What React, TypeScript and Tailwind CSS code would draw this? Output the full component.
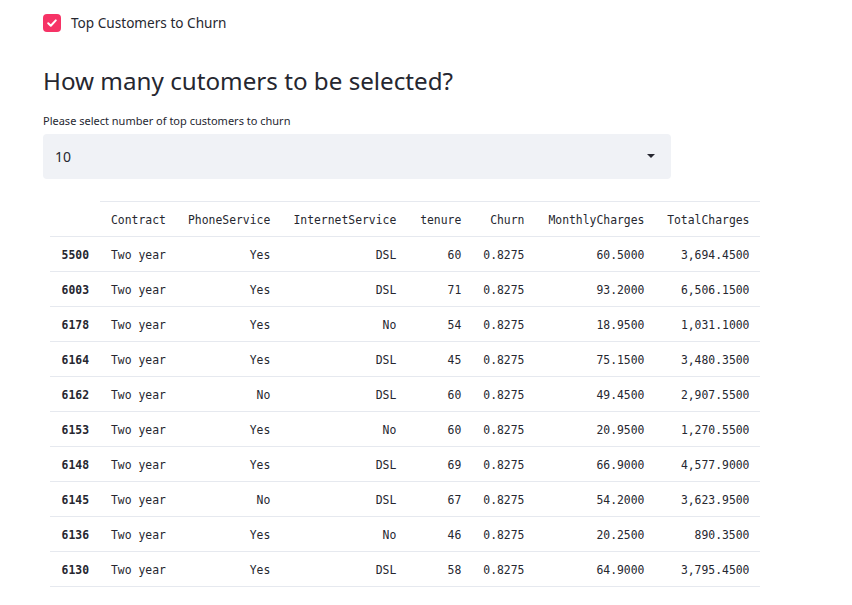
import React from "react";

const rows = [
  ["5500", "Two year", "Yes", "DSL", "60", "0.8275", "60.5000", "3,694.4500"],
  ["6003", "Two year", "Yes", "DSL", "71", "0.8275", "93.2000", "6,506.1500"],
  ["6178", "Two year", "Yes", "No", "54", "0.8275", "18.9500", "1,031.1000"],
  ["6164", "Two year", "Yes", "DSL", "45", "0.8275", "75.1500", "3,480.3500"],
  ["6162", "Two year", "No", "DSL", "60", "0.8275", "49.4500", "2,907.5500"],
  ["6153", "Two year", "Yes", "No", "60", "0.8275", "20.9500", "1,270.5500"],
  ["6148", "Two year", "Yes", "DSL", "69", "0.8275", "66.9000", "4,577.9000"],
  ["6145", "Two year", "No", "DSL", "67", "0.8275", "54.2000", "3,623.9500"],
  ["6136", "Two year", "Yes", "No", "46", "0.8275", "20.2500", "890.3500"],
  ["6130", "Two year", "Yes", "DSL", "58", "0.8275", "64.9000", "3,795.4500"],
];

const headers = ["Contract", "PhoneService", "InternetService", "tenure", "Churn", "MonthlyCharges", "TotalCharges"];
const widths = ["w-[77px]", "w-[104px]", "w-[126px]", "w-[65px]", "w-[63px]", "w-[120px]", "w-[105px]"];

export default function App() {
  const sans = { fontFamily: '"Noto Sans", "Open Sans", sans-serif' };
  return (
    <div className="w-[852px] h-[605px] bg-white text-[#262730] overflow-hidden" style={sans}>
      <div className="pl-[43px] pt-[14px]">
        <div className="flex items-center h-[18px]">
          <div className="w-[18px] h-[18px] rounded-[4px] bg-[#f63366] flex items-center justify-center">
            <svg width="12" height="12" viewBox="0 0 12 12">
              <path d="M2.2 6.2 L4.8 8.7 L9.8 3.4" stroke="white" strokeWidth="2" fill="none" strokeLinecap="round" strokeLinejoin="round" />
            </svg>
          </div>
          <span className="ml-[10px] text-[13.6px] leading-none">Top Customers to Churn</span>
        </div>
        <h2 className="mt-[34px] text-[24.2px] leading-[30px] font-normal text-[#262730]">How many cutomers to be selected?</h2>
        <div className="mt-[18px] text-[11px] leading-[14px]">Please select number of top customers to churn</div>
        <div className="mt-[6px] w-[628px] h-[45px] rounded-[4px] bg-[#f0f2f6] flex items-center justify-between pl-[12px] pr-[16px]">
          <span className="text-[14px]">10</span>
          <svg width="8" height="5" viewBox="0 0 8 5"><path d="M0 0 H8 L4 4 Z" fill="#262730" /></svg>
        </div>
      </div>
      <div className="pl-[50px] mt-[22px]">
        <table className="border-collapse text-[11.4px] text-[#262730]" style={{ fontFamily: '"DejaVu Sans Mono", monospace' }}>
          <thead>
            <tr className="h-[35px]">
              <th className="w-[50px] border-b border-[#e6e9ef]"></th>
              {headers.map((h, i) => (
                <th
                  key={h}
                  className={`${widths[i]} border-t border-b border-[#e6e9ef] font-normal px-[11px] pt-[3px] ${i === 0 ? "text-left" : "text-right"}`}
                >
                  {h}
                </th>
              ))}
            </tr>
          </thead>
          <tbody>
            {rows.map((r) => (
              <tr key={r[0]} className="h-[35px] border-b border-[#e6e9ef]">
                <td className="pr-[11px] pt-[3px] text-right font-bold">{r[0]}</td>
                {r.slice(1).map((c, i) => (
                  <td key={i} className={`px-[11px] pt-[3px] ${i === 0 ? "text-left" : "text-right"}`}>{c}</td>
                ))}
              </tr>
            ))}
          </tbody>
        </table>
      </div>
    </div>
  );
}
